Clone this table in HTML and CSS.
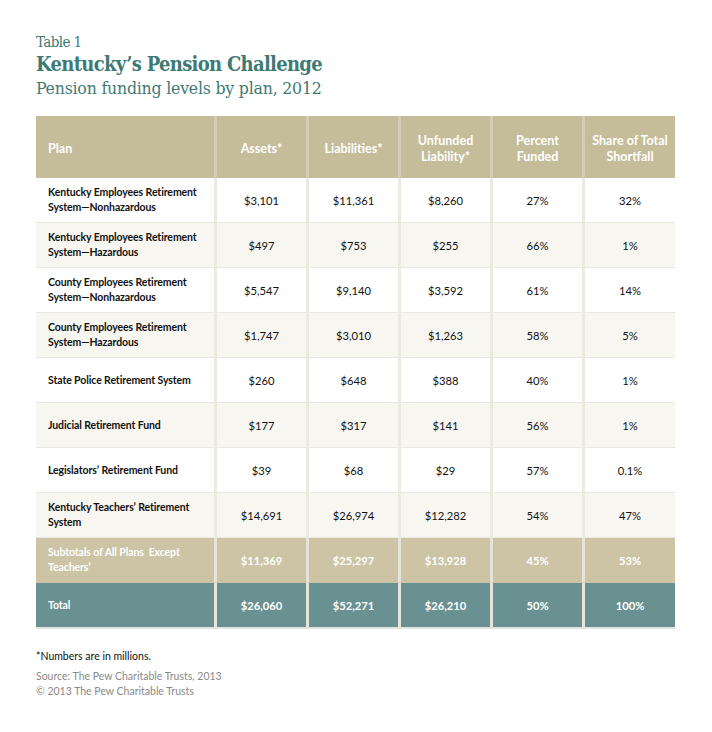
FILE: index.html
```html
<!DOCTYPE html>
<html>
<head>
<meta charset="utf-8">
<link rel="stylesheet" href="styles.css">
</head>
<body>
<div class="page">
  <div class="heading">
    <div class="label">Table 1</div>
    <div class="title">Kentucky’s Pension Challenge</div>
    <div class="subtitle">Pension funding levels by plan, 2012</div>
  </div>
  <table class="data">
    <colgroup>
      <col class="c-plan"><col class="c-num"><col class="c-num"><col class="c-num"><col class="c-num"><col class="c-last">
    </colgroup>
    <thead>
      <tr>
        <th class="plan">Plan</th>
        <th>Assets*</th>
        <th>Liabilities*</th>
        <th>Unfunded<br>Liability*</th>
        <th>Percent<br>Funded</th>
        <th>Share of Total<br>Shortfall</th>
      </tr>
    </thead>
    <tbody>
      <tr class="odd"><td class="plan">Kentucky Employees Retirement System—Nonhazardous</td><td>$3,101</td><td>$11,361</td><td>$8,260</td><td>27%</td><td>32%</td></tr>
      <tr class="even"><td class="plan">Kentucky Employees Retirement System—Hazardous</td><td>$497</td><td>$753</td><td>$255</td><td>66%</td><td>1%</td></tr>
      <tr class="odd"><td class="plan">County Employees Retirement System—Nonhazardous</td><td>$5,547</td><td>$9,140</td><td>$3,592</td><td>61%</td><td>14%</td></tr>
      <tr class="even"><td class="plan">County Employees Retirement System—Hazardous</td><td>$1,747</td><td>$3,010</td><td>$1,263</td><td>58%</td><td>5%</td></tr>
      <tr class="odd"><td class="plan">State Police Retirement System</td><td>$260</td><td>$648</td><td>$388</td><td>40%</td><td>1%</td></tr>
      <tr class="even"><td class="plan">Judicial Retirement Fund</td><td>$177</td><td>$317</td><td>$141</td><td>56%</td><td>1%</td></tr>
      <tr class="odd"><td class="plan">Legislators’ Retirement Fund</td><td>$39</td><td>$68</td><td>$29</td><td>57%</td><td>0.1%</td></tr>
      <tr class="even"><td class="plan">Kentucky Teachers’ Retirement System</td><td>$14,691</td><td>$26,974</td><td>$12,282</td><td>54%</td><td>47%</td></tr>
      <tr class="subtotal"><td class="plan">Subtotals of All Plans&nbsp; Except Teachers’</td><td>$11,369</td><td>$25,297</td><td>$13,928</td><td>45%</td><td>53%</td></tr>
      <tr class="total"><td class="plan">Total</td><td>$26,060</td><td>$52,271</td><td>$26,210</td><td>50%</td><td>100%</td></tr>
    </tbody>
  </table>
  <div class="notes">
    <div class="note">*Numbers are in millions.</div>
    <div class="source">Source: The Pew Charitable Trusts, 2013<br>© 2013 The Pew Charitable Trusts</div>
  </div>
</div>
</body>
</html>
```

FILE: styles.css
```css
html, body {
  margin: 0;
  padding: 0;
  background: #ffffff;
}
.page {
  padding: 32px 36px 0 36px;
  font-family: Lato, "Open Sans", sans-serif;
}
.heading {
  color: #3e7a74;
  font-family: "DejaVu Serif Condensed", "DejaVu Serif", serif;
  font-stretch: condensed;
}
.label {
  font-size: 15px;
  font-weight: 300;
  line-height: 20px;
  letter-spacing: -0.6px;
}
.title {
  font-size: 20px;
  font-weight: bold;
  line-height: 25px;
  letter-spacing: -0.7px;
}
.subtitle {
  font-size: 17.5px;
  line-height: 23px;
  font-weight: 300;
  letter-spacing: -0.2px;
}
.data {
  margin-top: 16px;
  width: 639px;
  table-layout: fixed;
  border-collapse: separate;
  border-spacing: 0;
}
.c-plan { width: 178px; }
.c-num { width: 92px; }
.c-last { width: 93px; }
.data th, .data td {
  padding: 0;
  text-align: center;
  vertical-align: middle;
}
.data th + th, .data td + td {
  border-left: 3px solid #ece9e0;
}
.data thead th {
  background: #c5bd9a;
  color: #ffffff;
  font-weight: 700;
  font-size: 12.5px;
  line-height: 16px;
  height: 59px;
  padding-top: 3px;
}
.data thead th + th {
  border-left-color: #d3cdb4;
}
.data th.plan, .data td.plan {
  text-align: left;
  padding-left: 12px;
}
.data tbody td {
  height: 44px;
  border-bottom: 1px solid #ebe8df;
  font-size: 11.2px;
  line-height: 15px;
  color: #111111;
}
.data tbody td.plan {
  font-weight: 700;
  font-size: 10.5px;
  letter-spacing: -0.1px;
  padding-right: 14px;
}
.data tr.odd td { background: #ffffff; }
.data tr.even td { background: #f7f6f1; }
.data tr.subtotal td {
  background: #ccc4a4;
  color: #ffffff;
  font-weight: 700;
  border-bottom: 1px solid #ccc4a4;
}
.data tr.total td {
  background: #6a9191;
  color: #ffffff;
  font-weight: 700;
  border-bottom: 2px solid #dde4e2;
}
.data tr.subtotal td + td, .data tr.total td + td {
  border-left-color: #e6e3da;
}
.notes {
  margin-top: 20px;
  font-size: 10.5px;
  line-height: 15px;
}
.note {
  color: #111111;
}
.source {
  margin-top: 5px;
  color: #8a8a8a;
}
```
